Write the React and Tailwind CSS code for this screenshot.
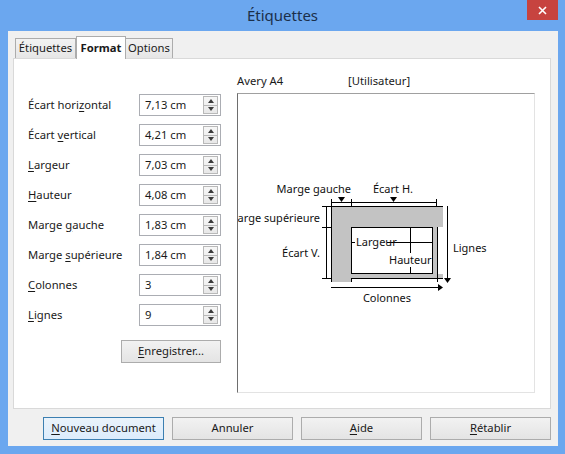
import React from "react";

const fields = [
  { label: "Écart horizontal", at: 10, value: "7,13 cm" },
  { label: "Écart vertical", at: 6, value: "4,21 cm" },
  { label: "Largeur", at: 0, value: "7,03 cm" },
  { label: "Hauteur", at: 0, value: "4,08 cm" },
  { label: "Marge gauche", at: 6, value: "1,83 cm" },
  { label: "Marge supérieure", at: 6, value: "1,84 cm" },
  { label: "Colonnes", at: 0, value: "3" },
  { label: "Lignes", at: 0, value: "9" },
];

// underlines the access-key letter
const Mn = ({ text, at }) => {
  if (at === undefined || at < 0) return <>{text}</>;
  return (
    <>
      {text.slice(0, at)}
      <span className="underline underline-offset-2">{text[at]}</span>
      {text.slice(at + 1)}
    </>
  );
};

const Spin = () => (
  <div className="flex flex-col w-[15px] h-[18px] border border-[#b9b9b9] bg-linear-to-b from-[#f7f7f7] to-[#e8e8e8]">
    <div className="flex-1 flex items-center justify-center border-b border-[#b9b9b9]">
      <svg width="6" height="4" viewBox="0 0 6 4">
        <path d="M0 4h6L3 0z" fill="#3a3a3a" />
      </svg>
    </div>
    <div className="flex-1 flex items-center justify-center">
      <svg width="6" height="4" viewBox="0 0 6 4">
        <path d="M0 0h6L3 4z" fill="#3a3a3a" />
      </svg>
    </div>
  </div>
);

const Field = ({ label, at, value }) => (
  <div className="flex items-center h-[22px]">
    <div className="w-[111px] text-[11.25px] text-[#1a1a1a]">
      <Mn text={label} at={at} />
    </div>
    <div className="w-[82px] h-[22px] border border-[#abadb3] bg-white flex items-center justify-between pl-[5px] pr-[2px] text-[11.25px] text-[#1a1a1a]">
      <span>{value}</span>
      <Spin />
    </div>
  </div>
);

const Button = ({ label, at, focused }) => (
  <div
    className={`w-[121px] h-[23px] flex items-center justify-center text-[11.25px] text-[#1a1a1a] border ${
      focused
        ? "border-[#3c7fb1] bg-linear-to-b from-[#eaf3fb] to-[#dcecfc]"
        : "border-[#acacac] bg-linear-to-b from-[#f2f2f2] to-[#e4e4e4]"
    }`}
  >
    <Mn text={label} at={at} />
  </div>
);

const Diagram = () => {
  const t = { fontFamily: "'Noto Sans', sans-serif", fontSize: 11, fill: "#111" };
  return (
    <svg width="296" height="298" viewBox="0 0 296 298">
      <g transform="translate(-238 -94)" shapeRendering="crispEdges">
        {/* grey margins */}
        <rect x="331" y="206" width="112" height="21" fill="#c3c3c3" />
        <rect x="331" y="206" width="20" height="76" fill="#c3c3c3" />
        <rect x="351" y="274" width="92" height="4" fill="#c3c3c3" />
        <rect x="433" y="227" width="4" height="51" fill="#c3c3c3" />
        {/* label box */}
        <rect x="351.5" y="227.5" width="81" height="46" fill="#fff" stroke="#000" />
        <line x1="331" y1="206.5" x2="443" y2="206.5" stroke="#000" />
        <line x1="331.5" y1="206" x2="331.5" y2="282" stroke="#000" />
        <line x1="437.5" y1="227" x2="437.5" y2="282" stroke="#000" />
        <line x1="351" y1="278.5" x2="443" y2="278.5" stroke="#000" />
        <line x1="351.5" y1="278" x2="351.5" y2="282" stroke="#000" />
        {/* inner cross */}
        <line x1="351" y1="242.5" x2="355" y2="242.5" stroke="#000" />
        <line x1="387" y1="242.5" x2="433" y2="242.5" stroke="#000" />
        <line x1="410.5" y1="227" x2="410.5" y2="253" stroke="#000" />
        <line x1="410.5" y1="267" x2="410.5" y2="274" stroke="#000" />
        {/* top dimension */}
        <line x1="331" y1="202.5" x2="437" y2="202.5" stroke="#000" />
        <line x1="331.5" y1="199" x2="331.5" y2="206" stroke="#000" />
        <line x1="351.5" y1="199" x2="351.5" y2="206" stroke="#000" />
        <line x1="436.5" y1="199" x2="436.5" y2="206" stroke="#000" />
        <path d="M338 197h7l-3.5 5z" fill="#000" shapeRendering="auto" />
        <path d="M390 197h7l-3.5 5z" fill="#000" shapeRendering="auto" />
        {/* left dimension */}
        <line x1="326.5" y1="206" x2="326.5" y2="279" stroke="#000" />
        <line x1="322" y1="206.5" x2="331" y2="206.5" stroke="#000" />
        <line x1="322" y1="227.5" x2="331" y2="227.5" stroke="#000" />
        <line x1="322" y1="278.5" x2="331" y2="278.5" stroke="#000" />
        {/* right arrow */}
        <line x1="447.5" y1="206" x2="447.5" y2="279" stroke="#000" />
        <path d="M444 278h7l-3.5 5z" fill="#000" shapeRendering="auto" />
        {/* bottom arrow */}
        <line x1="331" y1="287.5" x2="439" y2="287.5" stroke="#000" />
        <path d="M438 284v7l5-3.5z" fill="#000" shapeRendering="auto" />
        {/* labels */}
        <text x="351" y="193" textAnchor="end" style={t}>Marge gauche</text>
        <text x="393" y="193" textAnchor="middle" style={t}>Écart H.</text>
        <text x="320" y="222" textAnchor="end" style={t}>Marge supérieure</text>
        <text x="320" y="257" textAnchor="end" style={t}>Écart V.</text>
        <text x="453" y="252" style={t}>Lignes</text>
        <text x="387" y="302" textAnchor="middle" style={t}>Colonnes</text>
        <text x="356" y="246" style={t}>Largeur</text>
        <text x="389" y="264" style={t}>Hauteur</text>
      </g>
    </svg>
  );
};

export default function App() {
  return (
    <div className="w-[565px] h-[454px] bg-[#6ba7ef] flex flex-col font-['Noto_Sans',sans-serif]">
      <div className="relative h-[31px] flex items-center justify-center">
        <span className="text-[15px] text-[#1b2f4a] pb-[1px]">Étiquettes</span>
        <div className="absolute right-[7px] top-0 w-[31px] h-[20px] bg-[#c7433f] flex items-center justify-center">
          <svg width="9" height="9" viewBox="0 0 9 9">
            <path d="M1 1l7 7M8 1l-7 7" stroke="#fff" strokeWidth="1.6" />
          </svg>
        </div>
      </div>

      <div className="ml-[8px] w-[550px] h-[415px] bg-[#f0f0f0] flex flex-col pt-[5px]">
        <div className="flex items-end h-[22px] ml-[7px] relative z-10 text-[11.25px] text-[#1a1a1a]">
          <div className="w-[61px] h-[20px] flex items-center justify-center border border-b-0 border-[#acacac] bg-linear-to-b from-[#f2f2f2] to-[#e6e6e6]">
            Étiquettes
          </div>
          <div className="w-[50px] h-[23px] -mb-px flex items-center justify-center border border-b-0 border-[#acacac] bg-white font-bold">
            Format
          </div>
          <div className="w-[47px] h-[20px] flex items-center justify-center border border-b-0 border-l-0 border-[#acacac] bg-linear-to-b from-[#f2f2f2] to-[#e6e6e6]">
            Options
          </div>
        </div>

        <div className="ml-[5px] w-[538px] h-[351px] bg-white border border-[#d9d9d9] flex">
          <div className="w-[207px] pl-[14px] pt-[35px] flex flex-col">
            <div className="flex flex-col gap-[8px]">
              {fields.map((f) => (
                <Field key={f.label} {...f} />
              ))}
            </div>
            <div className="mt-[14px] self-end w-[100px] h-[23px] flex items-center justify-center text-[11.25px] text-[#1a1a1a] border border-[#acacac] bg-linear-to-b from-[#f2f2f2] to-[#e4e4e4]">
              <Mn text="Enregistrer..." at={0} />
            </div>
          </div>

          <div className="ml-[16px] pt-[14px] flex flex-col">
            <div className="flex h-[20px] text-[11.25px] text-[#1a1a1a] leading-[16px]">
              <span className="w-[111px]">Avery A4</span>
              <span>[Utilisateur]</span>
            </div>
            <div className="w-[298px] h-[300px] bg-white border border-l-[#6e6e6e] border-t-[#a0a0a0] border-r-[#e3e3e3] border-b-[#e3e3e3]">
              <Diagram />
            </div>
          </div>
        </div>

        <div className="flex gap-[8px] pl-[35px] mt-[8px]">
          <Button label="Nouveau document" at={0} focused />
          <Button label="Annuler" />
          <Button label="Aide" at={0} />
          <Button label="Rétablir" at={0} />
        </div>
      </div>
    </div>
  );
}
